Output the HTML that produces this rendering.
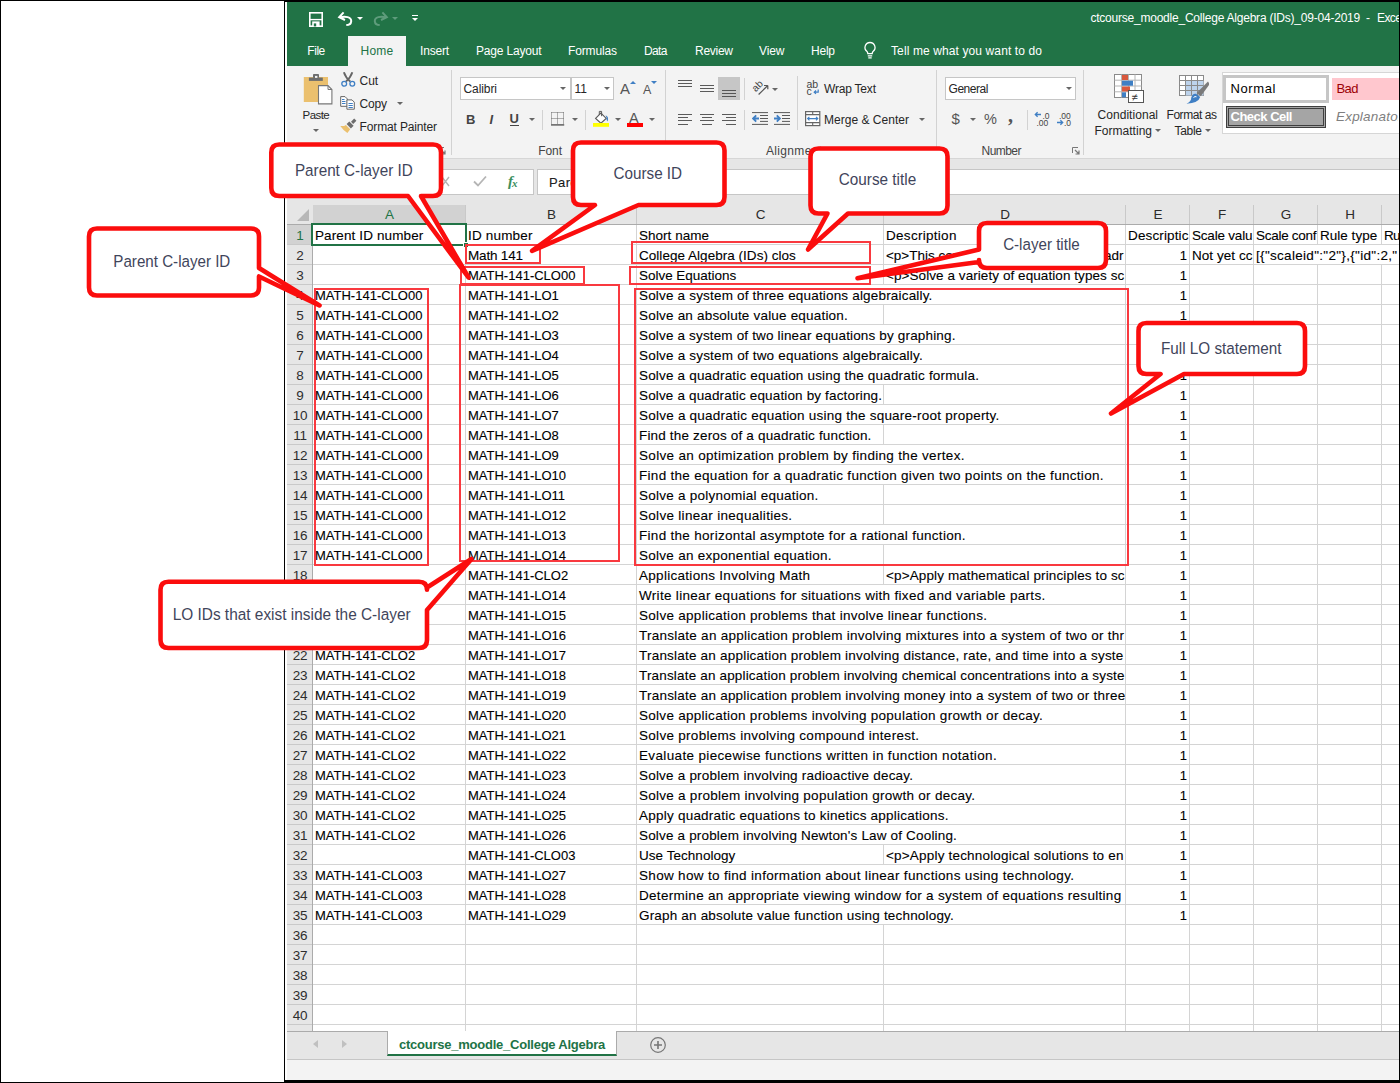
<!DOCTYPE html>
<html lang="en">
<head>
<meta charset="utf-8">
<title>ctcourse_moodle_College Algebra (IDs)_09-04-2019 - Excel</title>
<style>
html,body{margin:0;padding:0;}
body{width:1400px;height:1083px;position:relative;overflow:hidden;background:#fff;font-family:"Liberation Sans",sans-serif;color:#222;}
div,span{box-sizing:border-box;}
.abs{position:absolute;}
/* outer frame */
#fl{position:absolute;left:0;top:0;width:1px;height:1083px;background:#000;}
#ft{position:absolute;left:0;top:0;width:1400px;height:1px;background:#000;}
#fr{position:absolute;left:1399px;top:0;width:1px;height:1083px;background:#000;}
#fb{position:absolute;left:0;top:1082px;width:1400px;height:1px;background:#000;}
#fb2{position:absolute;left:284px;top:1080px;width:1116px;height:3px;background:#000;}
#xl{position:absolute;left:284px;top:1px;width:1px;height:1082px;background:#000;}
#xt{position:absolute;left:284px;top:1px;width:1116px;height:1px;background:#000;}
/* excel window */
#title{position:absolute;left:287px;top:2px;width:1112px;height:64px;background:#217346;}
#ttxt,#ttxt2,#ttxt3{position:absolute;left:1090.4px;top:10px;white-space:nowrap;color:#fff;font-size:12px;line-height:16px;}
#ttxt2{left:1366px;}
#ttxt3{left:1377px;letter-spacing:-0.6px;}
.tab{position:absolute;top:43px;color:#fff;font-size:12px;line-height:16px;white-space:nowrap;}
#hometab{position:absolute;left:348px;top:36px;width:58px;height:30px;background:#f3f3f3;}
#ribbon{position:absolute;left:287px;top:66px;width:1112px;height:92px;background:#f3f3f3;}
#ribline{position:absolute;left:287px;top:158px;width:1112px;height:1px;background:#d6d6d6;}
#fbar{position:absolute;left:287px;top:159px;width:1112px;height:46px;background:#e6e6e6;}
.rs{position:absolute;width:1px;background:#d2d2d2;}
.rt{position:absolute;font-size:12px;line-height:16px;color:#262626;white-space:nowrap;}
.gl{position:absolute;font-size:12px;line-height:16px;color:#444;white-space:nowrap;}
.dd{position:absolute;width:0;height:0;border-left:3px solid transparent;border-right:3px solid transparent;border-top:3px solid #666;}
.box{position:absolute;background:#fff;border:1px solid #c6c6c6;}
/* grid */
#grid{position:absolute;left:287px;top:205px;width:1112px;height:827px;background:#fff;
 }
#hdr{position:absolute;left:287px;top:205px;width:1112px;height:20px;background:#e6e6e6;border-bottom:1px solid #ababab;}
#rhcol{position:absolute;left:287px;top:225px;width:26px;height:806px;background:#e6e6e6;border-right:1px solid #ababab;}
.ch{position:absolute;top:205px;height:19px;border-right:1px solid #c9c9c9;font-size:13.5px;line-height:20px;text-align:center;color:#2b2b2b;padding-left:1px;}
.ch.sel{background:#d2d2d2;color:#217346;border-bottom:0;}
.rh{position:absolute;left:287px;width:25px;height:20px;border-bottom:1px solid #c9c9c9;font-size:13.5px;line-height:20px;padding-top:1px;padding-left:1px;text-align:center;color:#2e2e2e;letter-spacing:-0.2px;}
.rh.sel{background:#d2d2d2;color:#217346;}
#hl{position:absolute;left:313px;top:225px;width:1086px;height:806px;
 background-image:repeating-linear-gradient(to bottom,transparent 0,transparent 19px,#d4d4d4 19px,#d4d4d4 20px);}
.vg{position:absolute;top:225px;width:1px;height:806px;background:#d4d4d4;}
.c{-webkit-text-stroke:0.1px #000;position:absolute;height:19px;font-size:13px;line-height:20px;padding-top:1px;color:#000;white-space:nowrap;overflow:hidden;padding-left:2px;}
.c .s{font-size:13.5px;letter-spacing:0.3px;}
.c.o{background:#fff;padding-right:1px;}
.c.r{text-align:right;padding-right:2px;}
#selbox{position:absolute;left:311px;top:223px;width:156px;height:23px;border:2px solid #217346;}
#selh{position:absolute;left:463px;top:242px;width:6px;height:6px;background:#217346;border:1px solid #fff;}
/* sheet tabs */
#gbot{position:absolute;left:287px;top:1031px;width:1113px;height:1px;background:#ababab;}
#tabs{position:absolute;left:287px;top:1032px;width:1113px;height:27px;background:#e6e6e6;}
#tline{position:absolute;left:287px;top:1059px;width:1113px;height:1px;background:#c6c6c6;}
#status{position:absolute;left:287px;top:1060px;width:1113px;height:20px;background:#f3f3f3;}
#sheet{position:absolute;left:387px;top:1031px;width:230px;height:25px;background:#fff;border-bottom:2px solid #217346;border-left:1px solid #ababab;border-right:1px solid #ababab;color:#217346;font-weight:bold;font-size:13px;line-height:28px;text-align:center;white-space:nowrap;}
/* overlays */
.hr{position:absolute;border:2px solid #f9393f;}
.ct{position:absolute;font-size:16.8px;line-height:20px;color:#3f455b;white-space:nowrap;text-align:center;}
</style>
</head>
<body>
<div id="title"></div>
<div id="ttxt"><span style="letter-spacing:-0.22px">ctcourse_moodle_College Algebra (IDs)_09-04-2019</span></div>
<div id="ttxt2">-</div>
<div id="ttxt3">Excel</div>
<div id="hometab"></div>
<div class="tab" style="left:307.3px"><span style="letter-spacing:-0.45px">File</span></div>
<div class="tab" style="left:360.6px;color:#217346"><span style="letter-spacing:0.16px">Home</span></div>
<div class="tab" style="left:420.1px"><span style="letter-spacing:-0.20px">Insert</span></div>
<div class="tab" style="left:476.0px"><span style="letter-spacing:-0.19px">Page Layout</span></div>
<div class="tab" style="left:568.0px"><span style="letter-spacing:-0.15px">Formulas</span></div>
<div class="tab" style="left:644.0px"><span style="letter-spacing:-0.62px">Data</span></div>
<div class="tab" style="left:695.0px"><span style="letter-spacing:-0.27px">Review</span></div>
<div class="tab" style="left:759.0px"><span style="letter-spacing:-0.10px">View</span></div>
<div class="tab" style="left:811.0px"><span style="letter-spacing:-0.23px">Help</span></div>
<div class="tab" style="left:891.0px"><span style="letter-spacing:0.11px">Tell me what you want to do</span></div>
<svg class="abs" style="left:309.0px;top:12.0px" width="14" height="15" viewBox="0 0 14 15"><rect x="0.8" y="0.8" width="12.4" height="13.4" fill="none" stroke="#fff" stroke-width="1.6"/><path d="M0.8 7.6H13.2" stroke="#fff" stroke-width="1.4"/><rect x="3.2" y="9.4" width="7.4" height="4.8" fill="#fff"/><rect x="4.8" y="11.4" width="2.4" height="3" fill="#217346"/></svg>
<svg class="abs" style="left:337.0px;top:10.0px" width="17" height="16" viewBox="0 0 17 16"><path d="M3 7.2C8 6.2 14.6 6.6 14.2 11.3C13.9 14 11.6 15 9.3 15" fill="none" stroke="#fff" stroke-width="2"/><path d="M6.6 2.4L2.2 7.2L8 10" fill="none" stroke="#fff" stroke-width="2"/></svg>
<div class="dd" style="left:356.5px;top:17.0px;border-top-color:#fff"></div>
<svg class="abs" style="left:372.0px;top:10.0px" width="17" height="16" viewBox="0 0 17 16"><path d="M14 7.2C9 6.2 2.4 6.6 2.8 11.3C3.1 14 5.4 15 7.7 15" fill="none" stroke="#5f9c7c" stroke-width="2"/><path d="M10.4 2.4L14.8 7.2L9 10" fill="none" stroke="#5f9c7c" stroke-width="2"/></svg>
<div class="dd" style="left:391.5px;top:17.0px;border-top-color:#5f9c7c"></div>
<div class="abs" style="left:411.5px;top:15px;width:6px;height:1px;background:#fff"></div>
<div class="dd" style="left:411.5px;top:18px;border-top-color:#fff;border-left-width:3px;border-right-width:3px;border-top-width:3.5px"></div>
<svg class="abs" style="left:863.0px;top:41.0px" width="14" height="19" viewBox="0 0 14 19"><path d="M7 1.5a5 5 0 0 1 3 9c-.6.6-.8 1.2-.8 2.2H4.8c0-1-.2-1.6-.8-2.2a5 5 0 0 1 3-9Z" fill="none" stroke="#fff" stroke-width="1.3"/><path d="M4.8 14.8H9.2M5.3 16.8H8.7" stroke="#fff" stroke-width="1.2"/></svg>
<div id="ribbon"></div>
<div id="ribline"></div>
<div id="fbar"></div>
<svg class="abs" style="left:303.0px;top:73.0px" width="30" height="32" viewBox="0 0 30 32"><rect x="0.8" y="4" width="24.2" height="25" fill="#ebc06e"/><rect x="5.9" y="4.6" width="13.9" height="3.3" fill="#6d6d6d"/><rect x="10" y="1.1" width="6" height="4" rx="0.8" fill="#6d6d6d"/><rect x="12" y="2.9" width="2.4" height="2" fill="#f3f3f3"/><path d="M15.5 12.6H25L28.9 16.5V30.9H15.5Z" fill="#fff" stroke="#777" stroke-width="1.1"/><path d="M25 12.6V16.5H28.9" fill="none" stroke="#777" stroke-width="1"/></svg>
<div class="rt" style="left:302.6px;top:106.5px;font-size:11.5px"><span style="letter-spacing:-0.56px">Paste</span></div>
<div class="dd" style="left:312.5px;top:129.0px;border-top-color:#666"></div>
<svg class="abs" style="left:340.0px;top:71.0px" width="16" height="17" viewBox="0 0 16 17"><path d="M3.9 1.3Q5.5 6.5 10.2 10.4M12.3 1.3Q10.7 6.5 6 10.4" stroke="#666" stroke-width="1.9" fill="none"/><circle cx="4.2" cy="12.8" r="2.4" fill="none" stroke="#3f7fc4" stroke-width="1.3"/><circle cx="12.3" cy="12.8" r="2.4" fill="none" stroke="#3f7fc4" stroke-width="1.3"/></svg>
<div class="rt" style="left:359.6px;top:72.5px;"><span style="letter-spacing:-0.09px">Cut</span></div>
<svg class="abs" style="left:339.0px;top:95.0px" width="17" height="16" viewBox="0 0 17 16"><path d="M1.7 1.6H6L8.3 3.9V11.3H1.7Z" fill="#fff" stroke="#666"/><path d="M3 4.5H5.5M3 6.5H6.5M3 8.5H6.5" stroke="#3f7fc4" stroke-width="1"/><path d="M7.9 4.9H13L15.3 7.2V14.2H7.9Z" fill="#fff" stroke="#666"/><path d="M9.5 8.5H13.8M9.5 10.5H13.8M9.5 12.5H13.8" stroke="#3f7fc4" stroke-width="1"/></svg>
<div class="rt" style="left:359.6px;top:95.5px;"><span style="letter-spacing:-0.17px">Copy</span></div>
<div class="dd" style="left:396.5px;top:102.0px;border-top-color:#666"></div>
<svg class="abs" style="left:340.0px;top:118.0px" width="17" height="16" viewBox="0 0 17 16"><path d="M14.2 0.6L16.4 2.8L13.2 6L11 3.8Z" fill="#6d6d6d"/><path d="M9.3 3.4L13.6 7.7L10.9 10.4L6.6 6.1Z" fill="#6d6d6d"/><path d="M5.9 6.9L10.2 11.2L7.4 14.9Q3 12 0.3 7.9Q3.6 8.6 5.9 6.9Z" fill="#ebc06e"/></svg>
<div class="rt" style="left:359.6px;top:118.5px;"><span style="letter-spacing:-0.15px">Format Painter</span></div>
<svg class="abs" style="left:438.0px;top:147.0px" width="8" height="8" viewBox="0 0 8 8"><path d="M0.5 6V0.5H6" fill="none" stroke="#777"/><path d="M3 3L7 7M7 3.5V7H3.5" fill="none" stroke="#777" stroke-width="1.2"/></svg>
<div class="gl" style="left:338.0px;top:142.0px;"><span style="letter-spacing:0.08px">Clipboard</span></div>
<div class="rs" style="left:451px;top:70px;height:85px"></div>
<div class="box" style="left:460px;top:77px;width:111px;height:23px"></div>
<div class="box" style="left:571px;top:77px;width:43px;height:23px"></div>
<div class="rt" style="left:463.5px;top:80.5px;"><span style="letter-spacing:-0.09px">Calibri</span></div>
<div class="dd" style="left:560.0px;top:87.0px;border-top-color:#666"></div>
<div class="rt" style="left:574.5px;top:80.5px;"><span>11</span></div>
<div class="dd" style="left:603.5px;top:87.0px;border-top-color:#666"></div>
<div class="rt" style="left:620.0px;top:81.0px;font-size:15px;color:#555"><span>A</span></div>
<div class="dd" style="left:629.5px;top:81px;border-top:0;border-bottom:3.5px solid #3f7fc4"></div>
<div class="rt" style="left:643.0px;top:82.0px;font-size:12.5px;color:#555"><span>A</span></div>
<div class="dd" style="left:650.5px;top:81px;border-top-color:#3f7fc4;border-top-width:3.5px"></div>
<div class="rt" style="left:466.0px;top:111.5px;font-weight:bold;font-size:13px;color:#444"><span>B</span></div>
<div class="rt" style="left:489.5px;top:111.5px;font-style:italic;font-size:13px;color:#444;font-weight:bold"><span>I</span></div>
<div class="rt" style="left:509.5px;top:111.0px;font-size:13px;color:#444;font-weight:bold;"><span>U</span></div>
<div class="abs" style="left:510px;top:125px;width:9px;height:1px;background:#444"></div>
<div class="dd" style="left:528.5px;top:118.0px;border-top-color:#666"></div>
<div class="rs" style="left:542px;top:110px;height:20px"></div>
<svg class="abs" style="left:551.0px;top:112.0px" width="14" height="14" viewBox="0 0 14 14"><path d="M0.5 0.5H13M0.5 6.5H13M0.5 0.5V12M6.5 0.5V12M12.5 0.5V12" fill="none" stroke="#666" stroke-width="1" stroke-dasharray="1 1"/><path d="M0 12.9H13.2" stroke="#555" stroke-width="1.4"/></svg>
<div class="dd" style="left:571.5px;top:118.0px;border-top-color:#666"></div>
<div class="rs" style="left:585px;top:110px;height:20px"></div>
<svg class="abs" style="left:593.0px;top:110.0px" width="17" height="17" viewBox="0 0 17 17"><path d="M2.6 8.4L7.9 3.1L13.2 8.4L7.9 13.2Z" fill="#fff" stroke="#5a5a5a" stroke-width="1.1"/><path d="M6.3 5V1.4H8.6V6.2" fill="none" stroke="#5a5a5a" stroke-width="1"/><path d="M12.6 5.2Q16.2 6.8 14.6 11.4Q12.8 9.6 13.8 8.4Z" fill="#3f7fc4"/><rect x="0" y="13" width="16" height="3.8" fill="#ffff00"/></svg>
<div class="dd" style="left:614.5px;top:118.0px;border-top-color:#666"></div>
<div class="rt" style="left:629.0px;top:109.5px;font-size:14.5px;color:#555"><span>A</span></div>
<div class="abs" style="left:627px;top:123px;width:16px;height:3.6px;background:#ff0000"></div>
<div class="dd" style="left:648.5px;top:118.0px;border-top-color:#666"></div>
<div class="gl" style="left:538.3px;top:142.5px;"><span style="letter-spacing:-0.11px">Font</span></div>
<div class="rs" style="left:665px;top:70px;height:85px"></div>
<div class="abs" style="left:678.0px;top:80.0px;width:14.0px;height:1px;background:#5a5a5a"></div><div class="abs" style="left:678.0px;top:83.0px;width:14.0px;height:1px;background:#5a5a5a"></div><div class="abs" style="left:678.0px;top:86.0px;width:14.0px;height:1px;background:#5a5a5a"></div>
<div class="abs" style="left:700.0px;top:85.0px;width:14.0px;height:1px;background:#5a5a5a"></div><div class="abs" style="left:700.0px;top:88.0px;width:14.0px;height:1px;background:#5a5a5a"></div><div class="abs" style="left:700.0px;top:91.0px;width:14.0px;height:1px;background:#5a5a5a"></div>
<div class="abs" style="left:718px;top:77px;width:22px;height:23px;background:#c6c6c6"></div>
<div class="abs" style="left:722.0px;top:90.0px;width:14.0px;height:1px;background:#555"></div><div class="abs" style="left:722.0px;top:93.0px;width:14.0px;height:1px;background:#555"></div><div class="abs" style="left:722.0px;top:96.0px;width:14.0px;height:1px;background:#555"></div>
<div class="rs" style="left:744px;top:78px;height:22px"></div>
<svg class="abs" style="left:750.0px;top:77.0px" width="22" height="20" viewBox="0 0 22 20"><path d="M8.6 17.5L17.8 8.5M17.8 8.5H14M17.8 8.5V12.3" fill="none" stroke="#555" stroke-width="1.2"/><text x="0" y="0" font-size="10" font-family="Liberation Sans, sans-serif" fill="#444" transform="translate(5.8 15.3) rotate(-45)">ab</text></svg>
<div class="dd" style="left:771.5px;top:87.5px;border-top-color:#666"></div>
<div class="rs" style="left:797px;top:76px;height:54px"></div>
<svg class="abs" style="left:806.0px;top:79.0px" width="15" height="18" viewBox="0 0 15 18"><text x="0.5" y="8.5" font-size="10.5" font-family="Liberation Sans, sans-serif" fill="#444">ab</text><text x="0.5" y="16" font-size="10.5" font-family="Liberation Sans, sans-serif" fill="#444">c</text><path d="M12.2 10.5V13.2H8.3M10 11.5L8.2 13.2L10 14.9" fill="none" stroke="#3f7fc4" stroke-width="1.2"/></svg>
<div class="rt" style="left:824.0px;top:80.5px;"><span style="letter-spacing:-0.20px">Wrap Text</span></div>
<div class="abs" style="left:678.0px;top:114.0px;width:14.0px;height:1px;background:#5a5a5a"></div><div class="abs" style="left:678.0px;top:117.2px;width:10.0px;height:1px;background:#5a5a5a"></div><div class="abs" style="left:678.0px;top:120.4px;width:14.0px;height:1px;background:#5a5a5a"></div><div class="abs" style="left:678.0px;top:123.6px;width:10.0px;height:1px;background:#5a5a5a"></div>
<div class="abs" style="left:700.0px;top:114.0px;width:14.0px;height:1px;background:#5a5a5a"></div><div class="abs" style="left:702.0px;top:117.2px;width:10.0px;height:1px;background:#5a5a5a"></div><div class="abs" style="left:700.0px;top:120.4px;width:14.0px;height:1px;background:#5a5a5a"></div><div class="abs" style="left:702.0px;top:123.6px;width:10.0px;height:1px;background:#5a5a5a"></div>
<div class="abs" style="left:722.0px;top:114.0px;width:14.0px;height:1px;background:#5a5a5a"></div><div class="abs" style="left:726.0px;top:117.2px;width:10.0px;height:1px;background:#5a5a5a"></div><div class="abs" style="left:722.0px;top:120.4px;width:14.0px;height:1px;background:#5a5a5a"></div><div class="abs" style="left:726.0px;top:123.6px;width:10.0px;height:1px;background:#5a5a5a"></div>
<div class="rs" style="left:744px;top:110px;height:20px"></div>
<svg class="abs" style="left:752.0px;top:112.0px" width="17" height="14" viewBox="0 0 17 14"><path d="M0 0.6H16M8 3.5H16M8 6.5H16M8 9.4H16M0 12.4H16" stroke="#5a5a5a" stroke-width="1"/><path d="M7 6.5H1.5M4.2 3.4L1.1 6.5L4.2 9.6" fill="none" stroke="#3f7fc4" stroke-width="1.8"/></svg>
<svg class="abs" style="left:774.0px;top:112.0px" width="17" height="14" viewBox="0 0 17 14"><path d="M0 0.6H16M8 3.5H16M8 6.5H16M8 9.4H16M0 12.4H16" stroke="#5a5a5a" stroke-width="1"/><path d="M0 6.5H5.5M2.8 3.4L5.9 6.5L2.8 9.6" fill="none" stroke="#3f7fc4" stroke-width="1.8"/></svg>
<svg class="abs" style="left:805.0px;top:111.0px" width="16" height="16" viewBox="0 0 16 16"><rect x="0.6" y="0.6" width="14.2" height="14" fill="#fff" stroke="#666" stroke-width="1.2"/><path d="M0.6 3.6H14.8M0.6 11.6H14.8M7.7 0.6V3.6M7.7 11.6V14.6" stroke="#666" fill="none" stroke-width="1.1"/><path d="M2.6 7.6H12.8M4.4 5.8L2.6 7.6L4.4 9.4M11 5.8L12.8 7.6L11 9.4" stroke="#3f7fc4" fill="none" stroke-width="1.1"/></svg>
<div class="rt" style="left:824.0px;top:111.5px;"><span style="letter-spacing:0.02px">Merge &amp; Center</span></div>
<div class="dd" style="left:918.5px;top:118.0px;border-top-color:#666"></div>
<div class="gl" style="left:766.0px;top:142.5px;"><span style="letter-spacing:0.33px">Alignment</span></div>
<div class="rs" style="left:936px;top:70px;height:85px"></div>
<div class="box" style="left:945px;top:77px;width:131px;height:23px"></div>
<div class="rt" style="left:948.5px;top:80.5px;"><span style="letter-spacing:-0.45px">General</span></div>
<div class="dd" style="left:1065.5px;top:87.0px;border-top-color:#666"></div>
<div class="rt" style="left:951.5px;top:111.0px;font-size:15px;color:#555"><span>$</span></div>
<div class="dd" style="left:969.5px;top:118.0px;border-top-color:#666"></div>
<div class="rt" style="left:984.0px;top:111.0px;font-size:14.5px;color:#555"><span>%</span></div>
<div class="rt" style="left:1008.0px;top:107.0px;font-size:20px;font-weight:bold;color:#555;font-family:'Liberation Serif',serif"><span>,</span></div>
<div class="rs" style="left:1027px;top:110px;height:20px"></div>
<svg class="abs" style="left:1034.0px;top:111.0px" width="17" height="16" viewBox="0 0 17 16"><path d="M7 3.5H1.5M3.6 1.2L1.3 3.5L3.6 5.8" fill="none" stroke="#3f7fc4" stroke-width="1.3"/><text x="8.5" y="7.5" font-size="8.5" font-family="Liberation Sans, sans-serif" fill="#444">.0</text><text x="2.5" y="14.8" font-size="8.5" font-family="Liberation Sans, sans-serif" fill="#444">.00</text></svg>
<svg class="abs" style="left:1056.0px;top:111.0px" width="17" height="16" viewBox="0 0 17 16"><text x="3" y="7.5" font-size="8.5" font-family="Liberation Sans, sans-serif" fill="#444">.00</text><path d="M1 11.5H6.5M4.4 9.2L6.7 11.5L4.4 13.8" fill="none" stroke="#3f7fc4" stroke-width="1.3"/><text x="8" y="14.8" font-size="8.5" font-family="Liberation Sans, sans-serif" fill="#444">.0</text></svg>
<div class="gl" style="left:981.5px;top:142.5px;"><span style="letter-spacing:-0.54px">Number</span></div>
<svg class="abs" style="left:1072.0px;top:147.0px" width="8" height="8" viewBox="0 0 8 8"><path d="M0.5 6V0.5H6" fill="none" stroke="#777"/><path d="M3 3L7 7M7 3.5V7H3.5" fill="none" stroke="#777" stroke-width="1.2"/></svg>
<div class="rs" style="left:1083px;top:70px;height:85px"></div>
<svg class="abs" style="left:1114.0px;top:74.0px" width="30" height="30" viewBox="0 0 30 30"><rect x="0.5" y="0.5" width="27" height="23" fill="#fff" stroke="#8a8a8a"/><path d="M7.5 0.5V23.5M14.5 0.5V23.5M21 0.5V23.5M0.5 6.2H27.5M0.5 12H27.5M0.5 17.8H27.5" stroke="#b5b5b5" fill="none"/><rect x="8" y="1" width="6" height="5" fill="#d9593d"/><rect x="8" y="6.7" width="11" height="5" fill="#3f7fc4"/><rect x="8" y="12.5" width="8" height="5" fill="#d9593d"/><rect x="8" y="18.3" width="4" height="5" fill="#3f7fc4"/><rect x="14.5" y="16.5" width="15" height="12" fill="#fff" stroke="#555"/><text x="17.5" y="26.5" font-size="11" font-family="Liberation Sans, sans-serif" fill="#333">≠</text></svg>
<div class="rt" style="left:1097.5px;top:106.7px;"><span style="letter-spacing:0.05px">Conditional</span></div>
<div class="rt" style="left:1094.5px;top:122.9px;"><span style="letter-spacing:0.02px">Formatting</span></div>
<div class="dd" style="left:1155.2px;top:129.3px;border-top-color:#666"></div>
<svg class="abs" style="left:1179.0px;top:75.0px" width="31" height="30" viewBox="0 0 31 30"><rect x="0.5" y="0.5" width="24" height="20" fill="#fff" stroke="#8a8a8a"/><rect x="6.5" y="5.5" width="18" height="15" fill="#bdd3ec"/><path d="M6.5 0.5V20.5M12.5 0.5V20.5M18.5 0.5V20.5M0.5 5.5H24.5M0.5 10.5H24.5M0.5 15.5H24.5" stroke="#8a8a8a" fill="none"/><path d="M29 6.5Q30.5 8 30 10L21.8 21.2L17.6 18Z" fill="#7a7a7a"/><path d="M17 18.8L21.2 22Q19.5 28 7.5 28.8Q12.5 26.5 12.2 22.8Q13.5 18.2 17 18.8Z" fill="#3f7fc4"/><path d="M14.5 22.5Q16 21 17.5 21.8" stroke="#fff" stroke-width="1" fill="none"/></svg>
<div class="rt" style="left:1166.5px;top:106.7px;"><span style="letter-spacing:-0.44px">Format as</span></div>
<div class="rt" style="left:1174.5px;top:122.9px;"><span style="letter-spacing:-0.30px">Table</span></div>
<div class="dd" style="left:1204.6px;top:129.3px;border-top-color:#666"></div>
<div class="abs" style="left:1222px;top:72px;width:177px;height:62px;background:#fff;border:1px solid #d6d6d6;border-right:0"></div>
<div class="abs" style="left:1223px;top:75px;width:106px;height:28px;background:#fff;border:3px solid #c6c6c6"></div>
<div class="rt" style="left:1230.5px;top:81.0px;font-size:13px;color:#000"><span style="letter-spacing:0.62px">Normal</span></div>
<div class="abs" style="left:1332px;top:78px;width:67px;height:22px;background:#ffc7ce"></div>
<div class="rt" style="left:1336.5px;top:81.0px;font-size:13px;color:#9c0006"><span style="letter-spacing:-0.57px">Bad</span></div>
<div class="abs" style="left:1226px;top:106px;width:100px;height:22px;background:#a5a5a5;border:1px solid #3f3f3f;box-shadow:inset 0 0 0 1px #a5a5a5, inset 0 0 0 2px #3f3f3f"></div>
<div class="rt" style="left:1230.5px;top:108.5px;font-size:13px;color:#fff;font-weight:bold"><span style="letter-spacing:-0.50px">Check Cell</span></div>
<div class="abs" style="left:1336px;top:107px;width:62px;height:18px;overflow:hidden"><span style="font-size:13.5px;font-style:italic;color:#7f7f7f;line-height:18px;white-space:nowrap;letter-spacing:0.2px">Explanatory</span></div>
<div class="box" style="left:291px;top:169px;width:139px;height:26px"></div>
<div class="rt" style="left:295.0px;top:174.0px;font-size:13px"><span>A1</span></div>
<div class="box" style="left:437px;top:169px;width:97px;height:26px"></div>
<svg class="abs" style="left:441.0px;top:176.0px" width="9" height="11" viewBox="0 0 9 11"><path d="M1 1L8 10M8 1L1 10" stroke="#b5b5b5" stroke-width="1.4" fill="none"/></svg>
<svg class="abs" style="left:473.0px;top:175.0px" width="14" height="12" viewBox="0 0 14 12"><path d="M1 6.5L5 10.5L13 1.5" stroke="#b5b5b5" stroke-width="1.8" fill="none"/></svg>
<div class="abs" style="left:508px;top:171px;font-family:'Liberation Serif',serif;font-style:italic;font-weight:bold;font-size:15px;line-height:20px;color:#3b8f5e;letter-spacing:-1px">f<span style="font-size:11px;position:relative;top:1px">x</span></div>
<div class="box" style="left:537px;top:169px;width:870px;height:26px"></div>
<div class="c" style="left:547px;top:172px;width:200px;color:#222"><span style="letter-spacing:0.38px">Parent ID number</span></div>
<div id="grid"></div>
<div id="hdr"></div>
<div id="rhcol"></div>
<div class="abs" style="left:297px;top:209px;width:0;height:0;border-bottom:12px solid #b7b7b7;border-left:12px solid transparent"></div>
<div class="ch sel" style="left:313px;width:153px">A</div>
<div class="ch" style="left:466px;width:171px">B</div>
<div class="ch" style="left:637px;width:247px">C</div>
<div class="ch" style="left:884px;width:242px">D</div>
<div class="ch" style="left:1126px;width:64px">E</div>
<div class="ch" style="left:1190px;width:64px">F</div>
<div class="ch" style="left:1254px;width:64px">G</div>
<div class="ch" style="left:1318px;width:64px">H</div>
<div class="rh sel" style="top:225px">1</div>
<div class="rh" style="top:245px">2</div>
<div class="rh" style="top:265px">3</div>
<div class="rh" style="top:285px">4</div>
<div class="rh" style="top:305px">5</div>
<div class="rh" style="top:325px">6</div>
<div class="rh" style="top:345px">7</div>
<div class="rh" style="top:365px">8</div>
<div class="rh" style="top:385px">9</div>
<div class="rh" style="top:405px">10</div>
<div class="rh" style="top:425px">11</div>
<div class="rh" style="top:445px">12</div>
<div class="rh" style="top:465px">13</div>
<div class="rh" style="top:485px">14</div>
<div class="rh" style="top:505px">15</div>
<div class="rh" style="top:525px">16</div>
<div class="rh" style="top:545px">17</div>
<div class="rh" style="top:565px">18</div>
<div class="rh" style="top:585px">19</div>
<div class="rh" style="top:605px">20</div>
<div class="rh" style="top:625px">21</div>
<div class="rh" style="top:645px">22</div>
<div class="rh" style="top:665px">23</div>
<div class="rh" style="top:685px">24</div>
<div class="rh" style="top:705px">25</div>
<div class="rh" style="top:725px">26</div>
<div class="rh" style="top:745px">27</div>
<div class="rh" style="top:765px">28</div>
<div class="rh" style="top:785px">29</div>
<div class="rh" style="top:805px">30</div>
<div class="rh" style="top:825px">31</div>
<div class="rh" style="top:845px">32</div>
<div class="rh" style="top:865px">33</div>
<div class="rh" style="top:885px">34</div>
<div class="rh" style="top:905px">35</div>
<div class="rh" style="top:925px">36</div>
<div class="rh" style="top:945px">37</div>
<div class="rh" style="top:965px">38</div>
<div class="rh" style="top:985px">39</div>
<div class="rh" style="top:1005px">40</div>
<div id="hl"></div>
<div class="vg" style="left:465px"></div>
<div class="vg" style="left:636px"></div>
<div class="vg" style="left:883px"></div>
<div class="vg" style="left:1125px"></div>
<div class="vg" style="left:1189px"></div>
<div class="vg" style="left:1253px"></div>
<div class="vg" style="left:1317px"></div>
<div class="vg" style="left:1381px"></div>
<div class="c " style="left:313px;top:225px;width:152px"><span class="s" style="letter-spacing:0.12px">Parent ID number</span></div>
<div class="c " style="left:466px;top:225px;width:170px"><span class="s" style="letter-spacing:0.18px">ID number</span></div>
<div class="c " style="left:637px;top:225px;width:246px"><span class="s" style="letter-spacing:0.02px">Short name</span></div>
<div class="c " style="left:884px;top:225px;width:241px"><span class="s" style="letter-spacing:0.29px">Description</span></div>
<div class="c " style="left:1126px;top:225px;width:63px"><span class="s" style="letter-spacing:0.13px">Descriptic</span></div>
<div class="c " style="left:1190px;top:225px;width:63px"><span class="s" style="letter-spacing:-0.20px">Scale valu</span></div>
<div class="c " style="left:1254px;top:225px;width:63px"><span class="s" style="letter-spacing:-0.28px">Scale conf</span></div>
<div class="c " style="left:1318px;top:225px;width:63px"><span class="s" style="letter-spacing:0.02px">Rule type</span></div>
<div class="c " style="left:1382px;top:225px;width:17px"><span class="s" style="letter-spacing:-0.80px">Ru</span></div>
<div class="c " style="left:466px;top:245px;width:170px"><span class="s" style="letter-spacing:-0.18px">Math 141</span></div>
<div class="c " style="left:637px;top:245px;width:246px"><span class="s" style="letter-spacing:0.03px">College Algebra (IDs) clos</span></div>
<div class="c " style="left:884px;top:245px;width:241px"><span class="s" style="letter-spacing:-0.01px">&lt;p&gt;This course covers linear and quadr</span></div>
<div class="c r" style="left:1126px;top:245px;width:63px">1</div>
<div class="c " style="left:1190px;top:245px;width:63px"><span class="s" style="letter-spacing:0.05px">Not yet cc</span></div>
<div class="c o" style="left:1254px;top:245px;max-width:145px"><span class="s" style="letter-spacing:0.31px">[{"scaleid":"2"},{"id":2,"</span></div>
<div class="c " style="left:466px;top:265px;width:170px">MATH-141-CLO00</div>
<div class="c " style="left:637px;top:265px;width:246px"><span class="s" style="letter-spacing:-0.03px">Solve Equations</span></div>
<div class="c " style="left:884px;top:265px;width:241px"><span class="s" style="letter-spacing:0.07px">&lt;p&gt;Solve a variety of equation types sc</span></div>
<div class="c r" style="left:1126px;top:265px;width:63px">1</div>
<div class="c " style="left:313px;top:285px;width:152px">MATH-141-CLO00</div>
<div class="c " style="left:466px;top:285px;width:170px">MATH-141-LO1</div>
<div class="c o" style="left:637px;top:285px;max-width:488px"><span class="s" style="letter-spacing:0.18px">Solve a system of three equations algebraically.</span></div>
<div class="c r" style="left:1126px;top:285px;width:63px">1</div>
<div class="c " style="left:313px;top:305px;width:152px">MATH-141-CLO00</div>
<div class="c " style="left:466px;top:305px;width:170px">MATH-141-LO2</div>
<div class="c o" style="left:637px;top:305px;max-width:488px"><span class="s" style="letter-spacing:0.19px">Solve an absolute value equation.</span></div>
<div class="c r" style="left:1126px;top:305px;width:63px">1</div>
<div class="c " style="left:313px;top:325px;width:152px">MATH-141-CLO00</div>
<div class="c " style="left:466px;top:325px;width:170px">MATH-141-LO3</div>
<div class="c o" style="left:637px;top:325px;max-width:488px"><span class="s" style="letter-spacing:0.16px">Solve a system of two linear equations by graphing.</span></div>
<div class="c r" style="left:1126px;top:325px;width:63px">1</div>
<div class="c " style="left:313px;top:345px;width:152px">MATH-141-CLO00</div>
<div class="c " style="left:466px;top:345px;width:170px">MATH-141-LO4</div>
<div class="c o" style="left:637px;top:345px;max-width:488px"><span class="s" style="letter-spacing:0.19px">Solve a system of two equations algebraically.</span></div>
<div class="c r" style="left:1126px;top:345px;width:63px">1</div>
<div class="c " style="left:313px;top:365px;width:152px">MATH-141-CLO00</div>
<div class="c " style="left:466px;top:365px;width:170px">MATH-141-LO5</div>
<div class="c o" style="left:637px;top:365px;max-width:488px"><span class="s" style="letter-spacing:0.18px">Solve a quadratic equation using the quadratic formula.</span></div>
<div class="c r" style="left:1126px;top:365px;width:63px">1</div>
<div class="c " style="left:313px;top:385px;width:152px">MATH-141-CLO00</div>
<div class="c " style="left:466px;top:385px;width:170px">MATH-141-LO6</div>
<div class="c o" style="left:637px;top:385px;max-width:488px"><span class="s" style="letter-spacing:0.15px">Solve a quadratic equation by factoring.</span></div>
<div class="c r" style="left:1126px;top:385px;width:63px">1</div>
<div class="c " style="left:313px;top:405px;width:152px">MATH-141-CLO00</div>
<div class="c " style="left:466px;top:405px;width:170px">MATH-141-LO7</div>
<div class="c o" style="left:637px;top:405px;max-width:488px"><span class="s" style="letter-spacing:0.23px">Solve a quadratic equation using the square-root property.</span></div>
<div class="c r" style="left:1126px;top:405px;width:63px">1</div>
<div class="c " style="left:313px;top:425px;width:152px">MATH-141-CLO00</div>
<div class="c " style="left:466px;top:425px;width:170px">MATH-141-LO8</div>
<div class="c o" style="left:637px;top:425px;max-width:488px"><span class="s" style="letter-spacing:0.17px">Find the zeros of a quadratic function.</span></div>
<div class="c r" style="left:1126px;top:425px;width:63px">1</div>
<div class="c " style="left:313px;top:445px;width:152px">MATH-141-CLO00</div>
<div class="c " style="left:466px;top:445px;width:170px">MATH-141-LO9</div>
<div class="c o" style="left:637px;top:445px;max-width:488px"><span class="s" style="letter-spacing:0.32px">Solve an optimization problem by finding the vertex.</span></div>
<div class="c r" style="left:1126px;top:445px;width:63px">1</div>
<div class="c " style="left:313px;top:465px;width:152px">MATH-141-CLO00</div>
<div class="c " style="left:466px;top:465px;width:170px">MATH-141-LO10</div>
<div class="c o" style="left:637px;top:465px;max-width:488px"><span class="s" style="letter-spacing:0.30px">Find the equation for a quadratic function given two points on the function.</span></div>
<div class="c r" style="left:1126px;top:465px;width:63px">1</div>
<div class="c " style="left:313px;top:485px;width:152px">MATH-141-CLO00</div>
<div class="c " style="left:466px;top:485px;width:170px">MATH-141-LO11</div>
<div class="c o" style="left:637px;top:485px;max-width:488px"><span class="s" style="letter-spacing:0.25px">Solve a polynomial equation.</span></div>
<div class="c r" style="left:1126px;top:485px;width:63px">1</div>
<div class="c " style="left:313px;top:505px;width:152px">MATH-141-CLO00</div>
<div class="c " style="left:466px;top:505px;width:170px">MATH-141-LO12</div>
<div class="c o" style="left:637px;top:505px;max-width:488px"><span class="s" style="letter-spacing:0.30px">Solve linear inequalities.</span></div>
<div class="c r" style="left:1126px;top:505px;width:63px">1</div>
<div class="c " style="left:313px;top:525px;width:152px">MATH-141-CLO00</div>
<div class="c " style="left:466px;top:525px;width:170px">MATH-141-LO13</div>
<div class="c o" style="left:637px;top:525px;max-width:488px"><span class="s" style="letter-spacing:0.30px">Find the horizontal asymptote for a rational function.</span></div>
<div class="c r" style="left:1126px;top:525px;width:63px">1</div>
<div class="c " style="left:313px;top:545px;width:152px">MATH-141-CLO00</div>
<div class="c " style="left:466px;top:545px;width:170px">MATH-141-LO14</div>
<div class="c o" style="left:637px;top:545px;max-width:488px"><span class="s" style="letter-spacing:0.27px">Solve an exponential equation.</span></div>
<div class="c r" style="left:1126px;top:545px;width:63px">1</div>
<div class="c " style="left:466px;top:565px;width:170px">MATH-141-CLO2</div>
<div class="c " style="left:637px;top:565px;width:246px"><span class="s" style="letter-spacing:0.29px">Applications Involving Math</span></div>
<div class="c " style="left:884px;top:565px;width:241px"><span class="s" style="letter-spacing:0.12px">&lt;p&gt;Apply mathematical principles to sc</span></div>
<div class="c r" style="left:1126px;top:565px;width:63px">1</div>
<div class="c " style="left:313px;top:585px;width:152px">MATH-141-CLO2</div>
<div class="c " style="left:466px;top:585px;width:170px">MATH-141-LO14</div>
<div class="c o" style="left:637px;top:585px;max-width:488px"><span class="s" style="letter-spacing:0.31px">Write linear equations for situations with fixed and variable parts.</span></div>
<div class="c r" style="left:1126px;top:585px;width:63px">1</div>
<div class="c " style="left:313px;top:605px;width:152px">MATH-141-CLO2</div>
<div class="c " style="left:466px;top:605px;width:170px">MATH-141-LO15</div>
<div class="c o" style="left:637px;top:605px;max-width:488px"><span class="s" style="letter-spacing:0.29px">Solve application problems that involve linear functions.</span></div>
<div class="c r" style="left:1126px;top:605px;width:63px">1</div>
<div class="c " style="left:313px;top:625px;width:152px">MATH-141-CLO2</div>
<div class="c " style="left:466px;top:625px;width:170px">MATH-141-LO16</div>
<div class="c o" style="left:637px;top:625px;max-width:488px"><span class="s" style="letter-spacing:0.26px">Translate an application problem involving mixtures into a system of two or thr</span></div>
<div class="c r" style="left:1126px;top:625px;width:63px">1</div>
<div class="c " style="left:313px;top:645px;width:152px">MATH-141-CLO2</div>
<div class="c " style="left:466px;top:645px;width:170px">MATH-141-LO17</div>
<div class="c o" style="left:637px;top:645px;max-width:488px"><span class="s" style="letter-spacing:0.21px">Translate an application problem involving distance, rate, and time into a syste</span></div>
<div class="c r" style="left:1126px;top:645px;width:63px">1</div>
<div class="c " style="left:313px;top:665px;width:152px">MATH-141-CLO2</div>
<div class="c " style="left:466px;top:665px;width:170px">MATH-141-LO18</div>
<div class="c o" style="left:637px;top:665px;max-width:488px"><span class="s" style="letter-spacing:0.17px">Translate an application problem involving chemical concentrations into a syste</span></div>
<div class="c r" style="left:1126px;top:665px;width:63px">1</div>
<div class="c " style="left:313px;top:685px;width:152px">MATH-141-CLO2</div>
<div class="c " style="left:466px;top:685px;width:170px">MATH-141-LO19</div>
<div class="c o" style="left:637px;top:685px;max-width:488px"><span class="s" style="letter-spacing:0.22px">Translate an application problem involving money into a system of two or three</span></div>
<div class="c r" style="left:1126px;top:685px;width:63px">1</div>
<div class="c " style="left:313px;top:705px;width:152px">MATH-141-CLO2</div>
<div class="c " style="left:466px;top:705px;width:170px">MATH-141-LO20</div>
<div class="c o" style="left:637px;top:705px;max-width:488px"><span class="s" style="letter-spacing:0.28px">Solve application problems involving population growth or decay.</span></div>
<div class="c r" style="left:1126px;top:705px;width:63px">1</div>
<div class="c " style="left:313px;top:725px;width:152px">MATH-141-CLO2</div>
<div class="c " style="left:466px;top:725px;width:170px">MATH-141-LO21</div>
<div class="c o" style="left:637px;top:725px;max-width:488px"><span class="s" style="letter-spacing:0.29px">Solve problems involving compound interest.</span></div>
<div class="c r" style="left:1126px;top:725px;width:63px">1</div>
<div class="c " style="left:313px;top:745px;width:152px">MATH-141-CLO2</div>
<div class="c " style="left:466px;top:745px;width:170px">MATH-141-LO22</div>
<div class="c o" style="left:637px;top:745px;max-width:488px"><span class="s" style="letter-spacing:0.35px">Evaluate piecewise functions written in function notation.</span></div>
<div class="c r" style="left:1126px;top:745px;width:63px">1</div>
<div class="c " style="left:313px;top:765px;width:152px">MATH-141-CLO2</div>
<div class="c " style="left:466px;top:765px;width:170px">MATH-141-LO23</div>
<div class="c o" style="left:637px;top:765px;max-width:488px"><span class="s" style="letter-spacing:0.20px">Solve a problem involving radioactive decay.</span></div>
<div class="c r" style="left:1126px;top:765px;width:63px">1</div>
<div class="c " style="left:313px;top:785px;width:152px">MATH-141-CLO2</div>
<div class="c " style="left:466px;top:785px;width:170px">MATH-141-LO24</div>
<div class="c o" style="left:637px;top:785px;max-width:488px"><span class="s" style="letter-spacing:0.26px">Solve a problem involving population growth or decay.</span></div>
<div class="c r" style="left:1126px;top:785px;width:63px">1</div>
<div class="c " style="left:313px;top:805px;width:152px">MATH-141-CLO2</div>
<div class="c " style="left:466px;top:805px;width:170px">MATH-141-LO25</div>
<div class="c o" style="left:637px;top:805px;max-width:488px"><span class="s" style="letter-spacing:0.23px">Apply quadratic equations to kinetics applications.</span></div>
<div class="c r" style="left:1126px;top:805px;width:63px">1</div>
<div class="c " style="left:313px;top:825px;width:152px">MATH-141-CLO2</div>
<div class="c " style="left:466px;top:825px;width:170px">MATH-141-LO26</div>
<div class="c o" style="left:637px;top:825px;max-width:488px"><span class="s" style="letter-spacing:0.17px">Solve a problem involving Newton's Law of Cooling.</span></div>
<div class="c r" style="left:1126px;top:825px;width:63px">1</div>
<div class="c " style="left:466px;top:845px;width:170px">MATH-141-CLO03</div>
<div class="c " style="left:637px;top:845px;width:246px"><span class="s" style="letter-spacing:0.04px">Use Technology</span></div>
<div class="c " style="left:884px;top:845px;width:241px"><span class="s" style="letter-spacing:0.19px">&lt;p&gt;Apply technological solutions to en</span></div>
<div class="c r" style="left:1126px;top:845px;width:63px">1</div>
<div class="c " style="left:313px;top:865px;width:152px">MATH-141-CLO03</div>
<div class="c " style="left:466px;top:865px;width:170px">MATH-141-LO27</div>
<div class="c o" style="left:637px;top:865px;max-width:488px"><span class="s" style="letter-spacing:0.32px">Show how to find information about linear functions using technology.</span></div>
<div class="c r" style="left:1126px;top:865px;width:63px">1</div>
<div class="c " style="left:313px;top:885px;width:152px">MATH-141-CLO03</div>
<div class="c " style="left:466px;top:885px;width:170px">MATH-141-LO28</div>
<div class="c o" style="left:637px;top:885px;max-width:488px"><span class="s" style="letter-spacing:0.30px">Determine an appropriate viewing window for a system of equations resulting</span></div>
<div class="c r" style="left:1126px;top:885px;width:63px">1</div>
<div class="c " style="left:313px;top:905px;width:152px">MATH-141-CLO03</div>
<div class="c " style="left:466px;top:905px;width:170px">MATH-141-LO29</div>
<div class="c o" style="left:637px;top:905px;max-width:488px"><span class="s" style="letter-spacing:0.18px">Graph an absolute value function using technology.</span></div>
<div class="c r" style="left:1126px;top:905px;width:63px">1</div>
<div id="selbox"></div>
<div id="selh"></div>
<div id="gbot"></div>
<div id="tabs"></div>
<div id="tline"></div>
<div id="status"></div>
<div id="sheet"><span style="letter-spacing:-0.24px">ctcourse_moodle_College Algebra</span></div>
<div class="abs" style="left:313px;top:1040px;width:0;height:0;border-top:4.5px solid transparent;border-bottom:4.5px solid transparent;border-right:5px solid #c0c0c0"></div>
<div class="abs" style="left:342px;top:1040px;width:0;height:0;border-top:4.5px solid transparent;border-bottom:4.5px solid transparent;border-left:5px solid #c0c0c0"></div>
<svg class="abs" style="left:649.0px;top:1036.0px" width="18" height="18" viewBox="0 0 18 18"><circle cx="9" cy="9" r="7.3" fill="none" stroke="#767676" stroke-width="1.2"/><path d="M9 5V13M5 9H13" stroke="#767676" stroke-width="1.6"/></svg>
<div id="fb2"></div><div id="xl"></div><div id="xt"></div>
<div class="hr" style="left:314px;top:288px;width:115px;height:278px"></div>
<div class="hr" style="left:459px;top:284px;width:161px;height:278px"></div>
<div class="hr" style="left:465px;top:244px;width:76px;height:20px"></div>
<div class="hr" style="left:460px;top:266px;width:125px;height:19px"></div>
<div class="hr" style="left:631px;top:241px;width:240px;height:23px"></div>
<div class="hr" style="left:629px;top:266px;width:242px;height:19px"></div>
<div class="hr" style="left:634px;top:288px;width:495px;height:278px"></div>
<svg class="abs" style="left:0;top:0" width="1400" height="1083" viewBox="0 0 1400 1083">
<g fill="#fff" stroke="#fb0d0d" stroke-width="4.6" stroke-linejoin="round">
<path d="M279.3 144.5 H433.0 Q441.0 144.5 441.0 152.5 V188.0 Q441.0 196.0 433.0 196.0 H421.0 L468.5 277.5 L408.0 196.0 H279.3 Q271.3 196.0 271.3 188.0 V152.5 Q271.3 144.5 279.3 144.5 Z"/>
<path d="M97.0 228.5 H251.0 Q259.0 228.5 259.0 236.5 V268.0 L319.5 305.5 L259.0 276.5 V287.5 Q259.0 295.5 251.0 295.5 H97.0 Q89.0 295.5 89.0 287.5 V236.5 Q89.0 228.5 97.0 228.5 Z"/>
<path d="M581.0 142.5 H716.5 Q724.5 142.5 724.5 150.5 V197.0 Q724.5 205.0 716.5 205.0 H638.5 L532.0 250.8 L595.0 205.0 H581.0 Q573.0 205.0 573.0 197.0 V150.5 Q573.0 142.5 581.0 142.5 Z"/>
<path d="M818.5 148.5 H939.5 Q947.5 148.5 947.5 156.5 V205.5 Q947.5 213.5 939.5 213.5 H848.0 L808.0 249.5 L827.5 213.5 H818.5 Q810.5 213.5 810.5 205.5 V156.5 Q810.5 148.5 818.5 148.5 Z"/>
<path d="M987.0 223.0 H1098.0 Q1106.0 223.0 1106.0 231.0 V260.0 Q1106.0 268.0 1098.0 268.0 H987.0 Q979.0 268.0 979.0 260.0 V262.0 L857.5 278.3 L979.0 249.5 V231.0 Q979.0 223.0 987.0 223.0 Z"/>
<path d="M1146.5 323.0 H1297.0 Q1305.0 323.0 1305.0 331.0 V366.0 Q1305.0 374.0 1297.0 374.0 H1184.0 L1111.0 413.5 L1160.5 374.0 H1146.5 Q1138.5 374.0 1138.5 366.0 V331.0 Q1138.5 323.0 1146.5 323.0 Z"/>
<path d="M168.5 581.8 H419.0 Q427.0 581.8 427.0 589.8 V587.5 L471.5 559.0 L427.0 610.0 V640.0 Q427.0 648.0 419.0 648.0 H168.5 Q160.5 648.0 160.5 640.0 V589.8 Q160.5 581.8 168.5 581.8 Z"/>
</g></svg>
<div class="ct" style="left:204.3px;top:161.2px;width:300px"><span style="display:inline-block;transform:scaleX(0.9087)">Parent C-layer ID</span></div>
<div class="ct" style="left:22.3px;top:252.4px;width:300px"><span style="display:inline-block;transform:scaleX(0.9025)">Parent C-layer ID</span></div>
<div class="ct" style="left:497.9px;top:164.2px;width:300px"><span style="display:inline-block;transform:scaleX(0.9094)">Course ID</span></div>
<div class="ct" style="left:727.7px;top:170.3px;width:300px"><span style="display:inline-block;transform:scaleX(0.9131)">Course title</span></div>
<div class="ct" style="left:891.2px;top:235.3px;width:300px"><span style="display:inline-block;transform:scaleX(0.9027)">C-layer title</span></div>
<div class="ct" style="left:1070.9px;top:339.0px;width:300px"><span style="display:inline-block;transform:scaleX(0.9105)">Full LO statement</span></div>
<div class="ct" style="left:142.0px;top:605.0px;width:300px"><span style="display:inline-block;transform:scaleX(0.9179)">LO IDs that exist inside the C-layer</span></div>
<div id="fl"></div><div id="ft"></div><div id="fr"></div><div id="fb"></div>
</body>
</html>
